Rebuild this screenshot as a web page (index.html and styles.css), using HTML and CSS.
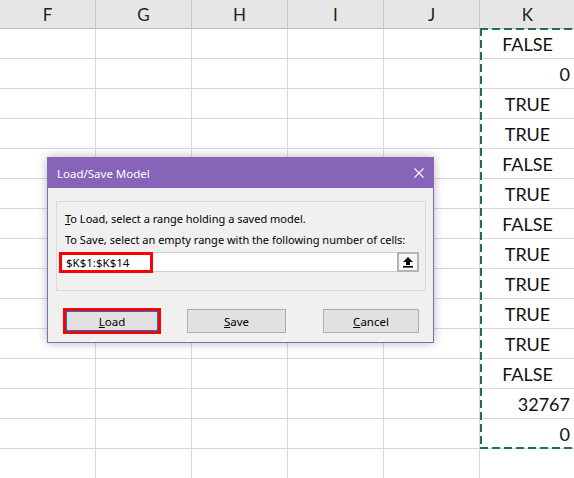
FILE: index.html
```html
<!DOCTYPE html>
<html>
<head>
<meta charset="utf-8">
<link rel="stylesheet" href="styles.css">
</head>
<body>
<div class="sheet">
  <div class="hdr">F</div><div class="hdr">G</div><div class="hdr">H</div><div class="hdr">I</div><div class="hdr">J</div><div class="hdr">K</div>

  <div class="c"></div><div class="c"></div><div class="c"></div><div class="c"></div><div class="c"></div><div class="c k">FALSE</div>
  <div class="c"></div><div class="c"></div><div class="c"></div><div class="c"></div><div class="c"></div><div class="c k num">0</div>
  <div class="c"></div><div class="c"></div><div class="c"></div><div class="c"></div><div class="c"></div><div class="c k">TRUE</div>
  <div class="c"></div><div class="c"></div><div class="c"></div><div class="c"></div><div class="c"></div><div class="c k">TRUE</div>
  <div class="c"></div><div class="c"></div><div class="c"></div><div class="c"></div><div class="c"></div><div class="c k">FALSE</div>
  <div class="c"></div><div class="c"></div><div class="c"></div><div class="c"></div><div class="c"></div><div class="c k">TRUE</div>
  <div class="c"></div><div class="c"></div><div class="c"></div><div class="c"></div><div class="c"></div><div class="c k">FALSE</div>
  <div class="c"></div><div class="c"></div><div class="c"></div><div class="c"></div><div class="c"></div><div class="c k">TRUE</div>
  <div class="c"></div><div class="c"></div><div class="c"></div><div class="c"></div><div class="c"></div><div class="c k">TRUE</div>
  <div class="c"></div><div class="c"></div><div class="c"></div><div class="c"></div><div class="c"></div><div class="c k">TRUE</div>
  <div class="c"></div><div class="c"></div><div class="c"></div><div class="c"></div><div class="c"></div><div class="c k">TRUE</div>
  <div class="c"></div><div class="c"></div><div class="c"></div><div class="c"></div><div class="c"></div><div class="c k">FALSE</div>
  <div class="c"></div><div class="c"></div><div class="c"></div><div class="c"></div><div class="c"></div><div class="c k num">32767</div>
  <div class="c"></div><div class="c"></div><div class="c"></div><div class="c"></div><div class="c"></div><div class="c k num">0</div>
  <div class="c"></div><div class="c"></div><div class="c"></div><div class="c"></div><div class="c"></div><div class="c k"></div>
</div>

<div class="marquee"></div>

<div class="dialog">
  <div class="titlebar">
    <span class="title">Load/Save Model</span>
    <svg class="close" width="10" height="10" viewBox="0 0 10 10"><path d="M0.5 0.5 L9.5 9.5 M9.5 0.5 L0.5 9.5" stroke="#fff" stroke-width="1.1" fill="none"/></svg>
  </div>
  <div class="group">
    <div class="line"><u>T</u>o Load, select a range holding a saved model.</div>
    <div class="line second">To Save, select an empty range with the following number of cells:</div>
    <div class="inputrow">
      <div class="field">
        <span class="value">$K$1:$K$14</span>
        <span class="mark"></span>
      </div>
      <div class="refbtn">
        <div class="refface">
          <svg width="10" height="11" viewBox="0 0 10 11"><path d="M5 0 L10 5 H7 V8 H3 V5 H0 Z" fill="#000"/><rect x="0" y="9" width="10" height="1.6" fill="#000"/></svg>
        </div>
      </div>
    </div>
  </div>
  <div class="buttons">
    <div class="btn load"><u>L</u>oad</div>
    <div class="btn save"><u>S</u>ave</div>
    <div class="btn cancel"><u>C</u>ancel</div>
  </div>
</div>
</body>
</html>
```

FILE: styles.css
```css
html, body {
  margin: 0;
  padding: 0;
  background: #ffffff;
  overflow: hidden;
}

.sheet {
  display: grid;
  grid-template-columns: repeat(6, 96px);
  grid-template-rows: 29px repeat(15, 30px);
  font-family: Lato, "Liberation Sans", sans-serif;
  color: #000;
}

.hdr {
  box-sizing: border-box;
  background: #e6e6e6;
  border-right: 1px solid #c9c9c9;
  border-bottom: 1px solid #bdbdbd;
  display: flex;
  align-items: center;
  justify-content: center;
  font-size: 17px;
  color: #222;
}

.c {
  box-sizing: border-box;
  border-right: 1px solid #d9d9d9;
  border-bottom: 1px solid #d9d9d9;
}

.k {
  display: flex;
  align-items: center;
  justify-content: center;
  font-size: 18px;
  padding-top: 1px;
  color: #111;
}

.k.num {
  justify-content: flex-end;
  padding-right: 5px;
}

.marquee {
  position: absolute;
  left: 480px;
  top: 28px;
  width: 100px;
  height: 421px;
  background:
    repeating-linear-gradient(to bottom, #217346 0 8px, transparent 8px 12px) left top / 2px 100% no-repeat,
    repeating-linear-gradient(to right, #217346 0 8px, transparent 8px 12px) left top / 100% 2px no-repeat,
    repeating-linear-gradient(to right, #217346 0 8px, transparent 8px 12px) left bottom / 100% 2px no-repeat;
  pointer-events: none;
}

.dialog {
  position: absolute;
  left: 47px;
  top: 157px;
  width: 385px;
  border: 1px solid #8764b8;
  background: #f0f0f0;
  box-shadow: 0 0 10px rgba(0, 0, 0, 0.28);
  font-family: "Noto Sans", "Open Sans", sans-serif;
  font-size: 11px;
  color: #000;
}

.titlebar {
  height: 30px;
  background: #8764b8;
  display: flex;
  align-items: center;
  justify-content: space-between;
  padding: 0 9px 0 9px;
}

.title {
  color: #fff;
  font-size: 11.5px;
}

.close {
  display: block;
}

.group {
  margin: 13px 7px 0 8px;
  height: 90px;
  box-sizing: border-box;
  border: 1px solid #dadada;
  padding: 9px 0 0 0;
}

.line {
  line-height: 16px;
  padding-left: 8px;
  white-space: nowrap;
}

.line.second {
  margin-top: 5px;
}

.inputrow {
  display: flex;
  margin-top: 4px;
  margin-left: 3px;
}

.field {
  position: relative;
  width: 337px;
  height: 20px;
  box-sizing: border-box;
  background: #fff;
  border: 1px solid #cfcfcf;
  border-right: none;
  display: flex;
  align-items: center;
}

.value {
  padding-left: 5px;
  font-size: 11.5px;
}

.mark {
  position: absolute;
  left: -2px;
  top: -1px;
  width: 94px;
  height: 21px;
  box-sizing: border-box;
  border: 3px solid #ff0000;
}

.refbtn {
  width: 22px;
  height: 20px;
  box-sizing: border-box;
  background: #b4b4b4;
  padding: 2px 2px 2px 2px;
}

.refface {
  width: 100%;
  height: 100%;
  background: #f6f6f6;
  display: flex;
  align-items: center;
  justify-content: center;
}

.refface svg {
  display: block;
}

.buttons {
  display: flex;
  align-items: center;
  height: 26px;
  margin-top: 17px;
  padding: 0 0 8px 17px;
  font-size: 11.5px;
}

.btn {
  box-sizing: border-box;
  width: 96px;
  height: 24px;
  background: #e1e1e1;
  border: 1px solid #adadad;
  display: flex;
  align-items: center;
  justify-content: center;
}

.btn.load {
  width: 92px;
  height: 20px;
  border: 1px solid #0078d7;
  outline: 3px solid #ff0000;
  margin-left: 1px;
}

.btn.save {
  margin-left: 29px;
  width: 99px;
}

.btn.cancel {
  margin-left: 37px;
}
```
